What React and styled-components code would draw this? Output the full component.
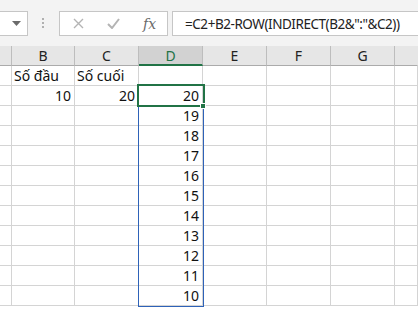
import React from 'react';
import styled, { createGlobalStyle } from 'styled-components';

const GlobalStyle = createGlobalStyle`
  html, body {
    margin: 0;
    padding: 0;
    background: #ffffff;
    overflow: hidden;
  }
  body {
    font-family: 'Noto Sans', 'Open Sans', sans-serif;
  }
`;

const Sheet = styled.div`
  width: 418px;
  height: 309px;
  overflow: hidden;
  background: #ffffff;
`;

const FormulaBar = styled.div`
  height: 46px;
  background: #f3f3f3;
  display: flex;
  align-items: flex-start;
  padding-top: 11px;
  box-sizing: border-box;
`;

const NameBox = styled.div`
  width: 40px;
  height: 25px;
  margin-left: -12px;
  background: #fff;
  border: 1px solid #c6c6c6;
  box-sizing: border-box;
  display: flex;
  align-items: center;
  justify-content: flex-end;
  padding-right: 6px;
`;

const Grip = styled.div`
  width: 31px;
  height: 25px;
  display: flex;
  align-items: center;
  justify-content: center;
`;

const FxBox = styled.div`
  width: 109px;
  height: 25px;
  background: #fff;
  border: 1px solid #c6c6c6;
  box-sizing: border-box;
  display: flex;
  align-items: center;
  gap: 23px;
  padding-left: 13px;
`;

const FormulaInput = styled.div`
  flex: 1;
  height: 25px;
  margin-left: 4px;
  margin-right: -10px;
  background: #fff;
  border: 1px solid #c6c6c6;
  box-sizing: border-box;
  display: flex;
  align-items: center;
  padding-left: 12px;
  font-size: 13.5px;
  letter-spacing: -0.45px;
  color: #222;
  white-space: nowrap;
`;

const Fx = styled.span`
  font-family: 'DejaVu Serif', 'Liberation Serif', serif;
  font-style: italic;
  font-size: 14px;
  color: #6a6a6a;
`;

const GridWrap = styled.div`
  position: relative;
`;

const Grid = styled.div`
  display: grid;
  grid-template-columns: 12px 63px 64px 64px 64px 64px 64px 1fr;
  grid-auto-rows: 20px;
`;

const HeadCell = styled.div`
  background: ${p => (p.$active ? '#d2d2d2' : '#e6e6e6')};
  color: ${p => (p.$active ? '#217346' : '#222')};
  border-right: 1px solid ${p => (p.$last ? 'transparent' : '#bdbdbd')};
  border-bottom: ${p => (p.$active ? '2px solid #217346' : '1px solid #ababab')};
  box-sizing: border-box;
  display: flex;
  align-items: center;
  justify-content: center;
  font-size: 14px;
`;

const Cell = styled.div`
  border-right: 1px solid #d4d4d4;
  border-bottom: 1px solid #d4d4d4;
  box-sizing: border-box;
  display: flex;
  align-items: flex-end;
  justify-content: ${p => (p.$num ? 'flex-end' : 'flex-start')};
  padding: 0 3px 0 2px;
  font-size: 14px;
  line-height: 18px;
  color: #111;
  white-space: nowrap;
`;

/* D3:D12 selection range */
const Range = styled.div`
  position: absolute;
  left: 138px;
  top: 59px;
  width: 66px;
  height: 202px;
  border: 1px solid #2e62b8;
  box-sizing: border-box;
  pointer-events: none;
`;

/* active cell D2 */
const Active = styled.div`
  position: absolute;
  left: 137px;
  top: 38px;
  width: 68px;
  height: 23px;
  border: 2px solid #217346;
  box-sizing: border-box;
  pointer-events: none;
`;

const Handle = styled.div`
  position: absolute;
  left: 200px;
  top: 57px;
  width: 6px;
  height: 6px;
  background: #217346;
  border: 1px solid #fff;
  box-sizing: border-box;
`;

const cols = ['', 'B', 'C', 'D', 'E', 'F', 'G', ''];

const rows = [
  ['', 'Số đầu', 'Số cuối', '', '', '', '', ''],
  ['', '10', '20', '20', '', '', '', ''],
];
for (let n = 19; n >= 10; n--) rows.push(['', '', '', String(n), '', '', '', '']);

export default function App() {
  return (
    <Sheet>
      <GlobalStyle />
      <FormulaBar>
        <NameBox>
          <svg width="9" height="5" viewBox="0 0 9 5">
            <path d="M0 0h9L4.5 5z" fill="#6b6b6b" />
          </svg>
        </NameBox>
        <Grip>
          <svg width="3" height="11" viewBox="0 0 3 11">
            <rect x="0" y="0" width="2" height="2" fill="#b0b0b0" />
            <rect x="0" y="4" width="2" height="2" fill="#b0b0b0" />
            <rect x="0" y="8" width="2" height="2" fill="#b0b0b0" />
          </svg>
        </Grip>
        <FxBox>
          <svg width="11" height="11" viewBox="0 0 11 11">
            <path d="M1 1l9 9M10 1l-9 9" stroke="#b4b4b4" strokeWidth="1.4" />
          </svg>
          <svg width="13" height="11" viewBox="0 0 13 11">
            <path d="M1 6l4 4 7-9" stroke="#b4b4b4" strokeWidth="2" fill="none" />
          </svg>
          <Fx>fx</Fx>
        </FxBox>
        <FormulaInput>=C2+B2-ROW(INDIRECT(B2&amp;":"&amp;C2))</FormulaInput>
      </FormulaBar>
      <GridWrap>
        <Grid>
          {cols.map((c, i) => (
            <HeadCell key={'h' + i} $active={c === 'D'} $last={i === cols.length - 1}>
              {c}
            </HeadCell>
          ))}
          {rows.map((r, ri) =>
            r.map((v, ci) => (
              <Cell key={ri + '-' + ci} $num={/^\d+$/.test(v)}>
                {v}
              </Cell>
            ))
          )}
        </Grid>
        <Range />
        <Active />
        <Handle />
      </GridWrap>
    </Sheet>
  );
}
